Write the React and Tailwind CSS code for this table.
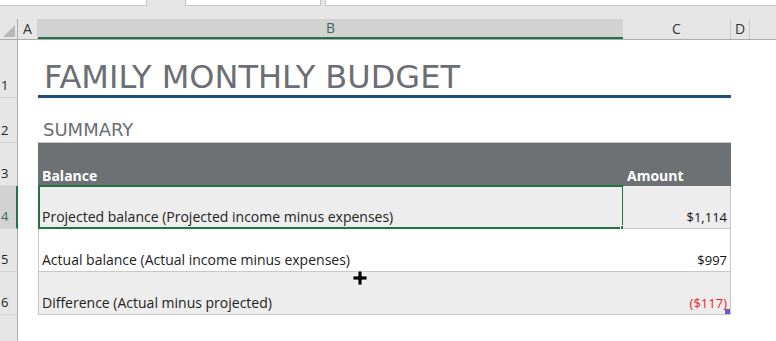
import React from 'react';

const cols = 'grid-cols-[18px_20px_585px_108px_19px_1fr]';

const rows = [
  { n: 4, label: 'Projected balance (Projected income minus expenses)', amount: '$1,114', shade: true, active: true },
  { n: 5, label: 'Actual balance (Actual income minus expenses)', amount: '$997', shade: false },
  { n: 6, label: 'Difference (Actual minus projected)', amount: '($117)', shade: true, negative: true },
];

const RowHead = ({ n, active }) => (
  <div
    className={`flex items-end pl-[1px] pb-[5px] text-[13px] leading-none border-b border-[#d4d4d4] ${
      active ? 'bg-[#d2d2d2] text-[#3d6b52] border-r-2 border-r-[#217346]' : 'bg-[#e6e6e6] text-[#222] border-r border-r-[#ababab]'
    }`}
  >
    {n}
  </div>
);

export default function App() {
  return (
    <div className="relative w-[776px] h-[341px] overflow-hidden bg-white text-[#222]" style={{ fontFamily: '"Open Sans", sans-serif' }}>
      {/* ribbon inputs strip */}
      <div className="flex h-[19px] bg-[#e6e6e6] items-start">
        <div className="w-[147px] h-[6px] bg-white border-b border-r border-[#c6c6c6]" />
        <div className="w-[38px]" />
        <div className="w-[136px] h-[6px] bg-white border-b border-x border-[#c6c6c6]" />
        <div className="w-[4px]" />
        <div className="flex-1 h-[6px] bg-white border-b border-l border-[#c6c6c6]" />
      </div>

      {/* column headers */}
      <div className={`grid ${cols} h-[21px] bg-[#e6e6e6] text-[14px] leading-none text-[#333] border-b border-[#ababab]`}>
        <div className="relative border-r border-[#ababab]">
          <div className="absolute right-[2px] bottom-[2px] w-0 h-0 border-l-[12px] border-l-transparent border-b-[12px] border-b-[#b8b8b8]" />
        </div>
        <div className="flex items-center justify-center border-r border-[#d0d0d0]">A</div>
        <div className="flex items-center justify-center bg-[#d2d2d2] border-b-2 border-[#217346] text-[#3d6b52]">B</div>
        <div className="flex items-center justify-center border-r border-[#c8c8c8]">C</div>
        <div className="flex items-center justify-center border-r border-[#c8c8c8]">D</div>
        <div />
      </div>

      {/* row 1: title */}
      <div className={`grid ${cols} h-[58px]`}>
        <RowHead n={1} />
        <div />
        <div className="col-span-2 flex items-end border-b-[3px] border-[#1f4e79] pb-[2px]">
          <span className="ml-[6px] text-[32px] leading-none text-[#6b6e74]" style={{ fontFamily: '"DejaVu Sans", Verdana, sans-serif' }}>
            FAMILY MONTHLY BUDGET
          </span>
        </div>
        <div />
        <div />
      </div>

      {/* row 2: section heading */}
      <div className={`grid ${cols} h-[45px]`}>
        <RowHead n={2} />
        <div />
        <div className="flex items-end pb-[3px] border-b border-[#c8c8c8]">
          <span className="ml-[5px] text-[18px] leading-none text-[#6b6e74]" style={{ fontFamily: '"DejaVu Sans", Verdana, sans-serif' }}>
            SUMMARY
          </span>
        </div>
        <div className="border-b border-[#c8c8c8]" />
        <div />
        <div />
      </div>

      {/* row 3: table header */}
      <div className={`grid ${cols} h-[43px]`}>
        <RowHead n={3} />
        <div />
        <div className="flex items-end bg-[#6d7173] pl-[4px] text-[14px] font-bold text-white">Balance</div>
        <div className="flex items-end bg-[#6d7173] pl-[4px] text-[14px] font-bold text-white">Amount</div>
        <div />
        <div />
      </div>

      {rows.map((r) => (
        <div key={r.n} className={`grid ${cols} h-[43px]`}>
          <RowHead n={r.n} active={r.active} />
          <div />
          <div className={`relative flex items-end pl-[3px] pb-[1px] text-[14px] border-b border-l border-[#c8c8c8] ${r.shade ? 'bg-[#ededed]' : 'bg-white'}`}>
            {r.label}
            {r.active && (
              <div className="absolute -left-[1px] -top-[1px] -right-[1px] -bottom-[1px] border-2 border-[#217346]">
                <div className="absolute -right-[4px] -bottom-[4px] w-[6px] h-[6px] bg-[#217346] border border-white" />
              </div>
            )}
          </div>
          <div
            className={`relative flex items-end justify-end pr-[3px] pb-[1px] text-[13px] border-b border-r border-[#c8c8c8] ${r.shade ? 'bg-[#ededed]' : 'bg-white'} ${
              r.negative ? 'text-[#e8251f]' : 'text-[#111]'
            }`}
          >
            {r.amount}
            {r.negative && <div className="absolute right-0 bottom-0 w-[5px] h-[5px] bg-[#6a5acd]" />}
          </div>
          <div />
          <div />
        </div>
      ))}

      {/* row 7, label falls below the fold */}
      <div className={`grid ${cols} h-[40px]`}>
        <div className="bg-[#e6e6e6] border-r border-[#ababab]" />
      </div>

      {/* cell cursor */}
      <svg className="absolute left-[353px] top-[271px]" width="14" height="14" viewBox="0 0 14 14">
        <path d="M5 0h4v5h5v4H9v5H5V9H0V5h5z" fill="#000" stroke="#fff" strokeWidth="0.8" />
      </svg>
    </div>
  );
}
